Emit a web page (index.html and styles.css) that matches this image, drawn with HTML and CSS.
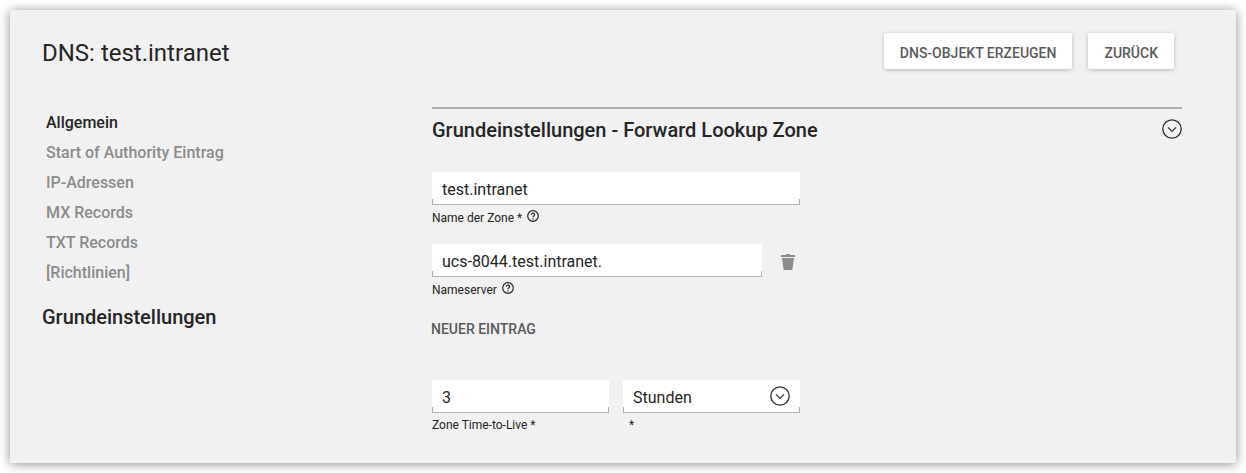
FILE: index.html
```
<!DOCTYPE html>
<html lang="de">
<head>
<meta charset="utf-8">
<meta name="viewport" content="width=device-width, initial-scale=1">
<title>DNS: test.intranet</title>
<link rel="stylesheet" href="styles.css">
</head>
<body>
<div class="panel">
  <header class="header">
    <h1 class="title">DNS: test.intranet</h1>
    <div class="actions">
      <button type="button" class="button">DNS-OBJEKT ERZEUGEN</button>
      <button type="button" class="button">ZURÜCK</button>
    </div>
  </header>
  <div class="body">
    <aside class="sidebar">
      <nav class="nav">
        <a class="nav-link nav-link-active" href="#allgemein">Allgemein</a>
        <a class="nav-link" href="#soa">Start of Authority Eintrag</a>
        <a class="nav-link" href="#ip">IP-Adressen</a>
        <a class="nav-link" href="#mx">MX Records</a>
        <a class="nav-link" href="#txt">TXT Records</a>
        <a class="nav-link" href="#richtlinien">[Richtlinien]</a>
      </nav>
      <h2 class="heading">Grundeinstellungen</h2>
    </aside>
    <main class="main" id="allgemein">
      <div class="section-head">
        <h2 class="heading">Grundeinstellungen - Forward Lookup Zone</h2>
        <button type="button" class="icon-button" aria-label="Einklappen">
          <svg class="chevron" viewBox="0 0 20 20" aria-hidden="true"><circle cx="10" cy="10" r="9.2"/><path d="M6 8.4l4 4 4-4"/></svg>
        </button>
      </div>
      <form class="form">
        <div class="field">
          <input class="input" id="zone" type="text" value="test.intranet">
          <div class="label-row">
            <label for="zone">Name der Zone *</label>
            <svg class="help" viewBox="0 0 12 12" aria-hidden="true"><circle cx="6" cy="6" r="5.3"/><path d="M4.4 4.8c0-2.2 3.2-2.1 3.2-.1C7.600 5.700 6 5.800 6 7.300M6 8.200v1.200"/></svg>
          </div>
        </div>
        <div class="field">
          <div class="entry">
            <input class="input" id="nameserver" type="text" value="ucs-8044.test.intranet.">
            <button type="button" class="icon-button" aria-label="Eintrag entfernen">
              <svg class="trash" viewBox="0 0 14 16" aria-hidden="true"><path d="M0 1h5V0h4v1h5v2H0zM1 4h12l-1.700 12H2.700z"/></svg>
            </button>
          </div>
          <div class="label-row">
            <label for="nameserver">Nameserver</label>
            <svg class="help" viewBox="0 0 12 12" aria-hidden="true"><circle cx="6" cy="6" r="5.3"/><path d="M4.4 4.8c0-2.2 3.2-2.1 3.2-.1C7.600 5.700 6 5.800 6 7.300M6 8.200v1.200"/></svg>
          </div>
        </div>
        <button type="button" class="text-button">NEUER EINTRAG</button>
        <div class="pair">
          <div class="field">
            <input class="input" id="ttl" type="text" value="3">
            <div class="label-row"><label for="ttl">Zone Time-to-Live *</label></div>
          </div>
          <div class="field">
            <div class="select-box">
              <select class="input select" id="unit"><option>Stunden</option></select>
              <svg class="chevron select-icon" viewBox="0 0 20 20" aria-hidden="true"><circle cx="10" cy="10" r="9.2"/><path d="M6 8.400l4 4 4-4"/></svg>
            </div>
            <div class="label-row label-row-indent"><label for="unit">*</label></div>
          </div>
        </div>
      </form>
    </main>
  </div>
</div>
</body>
</html>
```
FILE: styles.css
```
* { box-sizing: border-box; }

body {
  margin: 0;
  padding: 10px;
  background: #fff;
  color: #252525;
  font-family: Roboto, "Liberation Sans", sans-serif;
  font-size: 16px;
}

button, input, select { font: inherit; color: inherit; }

.panel {
  padding: 23px 54px 26px 32px;
  background: #f1f1f1;
  box-shadow: 0 1px 10px rgba(0, 0, 0, 0.45);
}

.header {
  display: flex;
  align-items: flex-start;
  justify-content: space-between;
  padding-right: 8px;
  margin-bottom: 38px;
}

.title {
  margin: 0;
  padding-top: 4px;
  font-size: 24px;
  font-weight: 400;
  line-height: 32px;
}

.actions { display: flex; gap: 16px; }

.button {
  height: 36px;
  padding: 4px 16px 0;
  border: 0;
  border-radius: 2px;
  background: #fff;
  box-shadow: 0 1px 4px rgba(0, 0, 0, 0.24);
  color: #5a5a5a;
  font-size: 14px;
  font-weight: 500;
}

.body {
  display: grid;
  grid-template-columns: minmax(200px, 390px) minmax(0, 750px);
}

.nav {
  display: flex;
  flex-direction: column;
  align-items: flex-start;
  padding: 1px 4px 0;
  margin-bottom: 15px;
}

.nav-link {
  color: #8b8b8b;
  font-weight: 500;
  line-height: 30px;
  text-decoration: none;
}

.nav-link-active { color: #252525; }

.heading {
  margin: 0;
  font-size: 20px;
  font-weight: 500;
  line-height: 28px;
}

.section-head {
  display: flex;
  align-items: flex-start;
  justify-content: space-between;
  padding-top: 7px;
  margin-bottom: 28px;
  border-top: 2px solid #b0b0b0;
}

.icon-button {
  display: flex;
  padding: 3px 0 0;
  border: 0;
  background: none;
}

.chevron {
  width: 20px;
  height: 20px;
  fill: none;
  stroke: #333;
  stroke-width: 1.3;
}

.form {
  width: calc(50% - 7px);
  display: flex;
  flex-direction: column;
  align-items: stretch;
}

.field { margin-bottom: 14px; }

.input {
  display: block;
  width: 100%;
  height: 33px;
  padding: 1px 10px 0;
  border: 0;
  border-radius: 0;
  background:
    linear-gradient(#b0b0b0, #b0b0b0) left bottom / 100% 1px no-repeat,
    linear-gradient(#b0b0b0, #b0b0b0) left bottom / 1px 6px no-repeat,
    linear-gradient(#b0b0b0, #b0b0b0) right bottom / 1px 6px no-repeat,
    #fff;
  outline: 0;
}

.label-row {
  display: flex;
  align-items: center;
  gap: 5px;
  padding-top: 1px;
  font-size: 12px;
  line-height: 24px;
}

.label-row-indent { padding-left: 6px; }

.help {
  width: 12px;
  height: 12px;
  margin-bottom: 4px;
  fill: none;
  stroke: #252525;
  stroke-width: 1.2;
}

.entry {
  display: grid;
  grid-template-columns: 1fr 14px;
  align-items: center;
  gap: 19px;
  padding-right: 5px;
}

.trash {
  width: 14px;
  height: 16px;
  fill: #8b8b8b;
}

.text-button {
  align-self: flex-start;
  height: 36px;
  padding: 0;
  margin: -5px 0 33px -1px;
  border: 0;
  background: none;
  color: #5a5a5a;
  font-size: 14px;
  font-weight: 500;
}

.pair {
  display: grid;
  grid-template-columns: 1fr 1fr;
  gap: 14px;
}

.pair .field { margin-bottom: 0; }

.pair .label-row { padding-top: 0; }

.select-box { position: relative; }

.select { appearance: none; }

.select-icon {
  position: absolute;
  top: 6px;
  right: 10px;
  pointer-events: none;
}
```
